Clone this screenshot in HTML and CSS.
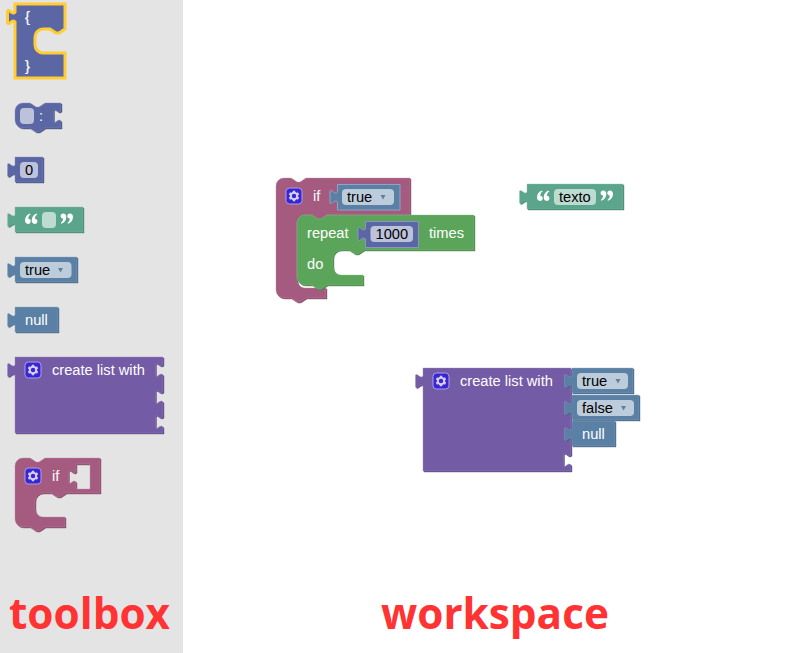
FILE: index.html
```html
<!DOCTYPE html>
<html lang="en">
<head>
<meta charset="utf-8">
<title>Block editor</title>
<link rel="stylesheet" href="styles.css">
</head>
<body>
<svg class="defs" aria-hidden="true">
  <defs>
    <g id="gear">
      <rect class="gear-box" x=".5" y=".5" width="16" height="16" rx="3.5"/>
      <path class="gear-teeth" d="M8.5 3.2V13.8M3.9 5.85L13.1 11.15M3.9 11.15L13.1 5.85"/>
      <circle class="gear-ring" cx="8.5" cy="8.5" r="3.2"/>
    </g>
    <g id="open-quote">
      <path d="M5 0C2 1 0 3.400 0 6.800 0 9 1.200 10.400 3 10.400 4.600 10.400 5.700 9.300 5.700 7.700 5.700 6.200 4.700 5.200 3.300 5.200 3.200 3.200 4 1.900 5.500.9zM11.700 0C8.700 1 6.700 3.400 6.700 6.800 6.700 9 7.900 10.400 9.700 10.400 11.300 10.400 12.400 9.300 12.400 7.700 12.400 6.200 11.400 5.200 10 5.200 9.900 3.200 10.700 1.900 12.200.9z"/>
    </g>
    <path id="arrow" d="M.5 0H5.500L3 4.500Z"/>
  </defs>
</svg>
<main class="editor">
  <aside class="toolbox">
    <div class="palette">
      <svg class="item" width="183" height="90" viewBox="0 0 183 90">
        <path class="indigo selected" d="M15 4H65V29l-6 4h-3l-6-4h-7a8 8 0 0 0-8 8v8a8 8 0 0 0 8 8H65V78H15V22c-1.500-2-3.500-.5-5 .8s-2.500.9-2.500-.3v-11c0-1.200 1-1.600 2.500-.3s3.500 2.800 5 .8z"/>
        <text class="label brace" x="25" y="22">{</text><text class="label brace" x="25" y="71">}</text>
      </svg>
      <svg class="item" width="183" height="55" viewBox="0 90 183 55">
        <path class="block indigo" d="M15 111a8 8 0 0 1 8-8h7l6 4h3l6-4H61v8c-1.500 2-3.500.5-5-.8s-2.500-.9-2.500.3v11c0 1.200 1 1.600 2.500.3s3.500-2.800 5-.8v7H45l-6 4h-3l-6-4h-7a8 8 0 0 1-8-8z"/>
        <rect class="field" x="20" y="108" width="14" height="16" rx="4"/>
        <text class="label" x="39" y="121">:</text>
      </svg>
      <svg class="item" width="183" height="50" viewBox="0 145 183 50">
        <path class="block indigo" d="M15 157H43v25H15v-7c-1.500-2-3.500-.5-5 .8s-2.500.9-2.500-.3v-11c0-1.200 1-1.600 2.500-.3s3.500 2.800 5 .8z"/>
        <rect class="field" x="20" y="162" width="18" height="16" rx="4"/>
        <text class="value" x="25" y="175">0</text>
      </svg>
      <svg class="item" width="183" height="50" viewBox="0 195 183 50">
        <path class="block teal" d="M15 207H83v25H15v-7c-1.500-2-3.500-.5-5 .8s-2.500.9-2.500-.3v-11c0-1.200 1-1.600 2.500-.3s3.500 2.800 5 .8z"/>
        <use class="quote" href="#open-quote" x="25" y="213.500"/>
        <rect class="field" x="42" y="212" width="14" height="16" rx="4"/>
        <use class="quote" href="#open-quote" transform="translate(73 223.800) rotate(180)"/>
      </svg>
      <svg class="item" width="183" height="50" viewBox="0 245 183 50">
        <path class="block blue" d="M15 257H77v25H15v-7c-1.500-2-3.500-.5-5 .8s-2.500.9-2.500-.3v-11c0-1.200 1-1.600 2.500-.3s3.500 2.800 5 .8z"/>
        <rect class="field" x="20" y="262" width="51.500" height="16" rx="4"/>
        <text class="value" x="25" y="275">true</text>
        <use class="arrow" href="#arrow" x="57.500" y="268"/>
      </svg>
      <svg class="item" width="183" height="50" viewBox="0 295 183 50">
        <path class="block blue" d="M15 307H58v25H15v-7c-1.500-2-3.500-.5-5 .8s-2.500.9-2.500-.3v-11c0-1.200 1-1.600 2.500-.3s3.500 2.800 5 .8z"/>
        <text class="label" x="25" y="325">null</text>
      </svg>
      <svg class="item" width="183" height="105" viewBox="0 345 183 105">
        <path class="block purple" d="M15 357H163v8c-1.500 2-3.500.5-5-.8s-2.500-.9-2.500.3v11c0 1.200 1 1.600 2.500.3s3.500-2.800 5-.8V392c-1.500 2-3.500.5-5-.8s-2.500-.9-2.500.3v11c0 1.200 1 1.600 2.500.3s3.500-2.800 5-.8V417c-1.500 2-3.500.5-5-.8s-2.500-.9-2.500.3v11c0 1.200 1 1.600 2.500.3s3.500-2.800 5-.8V433H15V375c-1.500-2-3.500-.5-5 .8s-2.500.9-2.500-.3v-11c0-1.200 1-1.600 2.500-.3s3.500 2.800 5 .8z"/>
        <use href="#gear" x="24.500" y="361.500"/>
        <text class="label" x="52" y="375">create list with</text>
      </svg>
      <svg class="item" width="183" height="100" viewBox="0 450 183 100">
        <path class="block plum" fill-rule="evenodd" d="M15 466a8 8 0 0 1 8-8h7l6 4h3l6-4H100V493H66l-6 4h-3l-6-4h-8a8 8 0 0 0-8 8v8a8 8 0 0 0 8 8H65V527H45l-6 4h-3l-6-4h-7a8 8 0 0 1-8-8zM76 464H90V489H76V482c-1.500-2-3.500-.5-5 .8s-2.500.9-2.500-.3v-11c0-1.200 1-1.600 2.500-.3s3.500 2.800 5 .8z"/>
        <use href="#gear" x="24.500" y="467.500"/>
        <text class="label" x="52" y="481">if</text>
      </svg>
    </div>
    <h2 class="caption">toolbox</h2>
  </aside>
  <section class="workspace">
    <svg class="canvas" width="604" height="550" viewBox="183 0 604 550">
      <g>
        <path class="block plum" d="M276 186a8 8 0 0 1 8-8h7l6 4h3l6-4H410V215H327l-6 4h-3l-6-4h-7a8 8 0 0 0-8 8V280a8 8 0 0 0 8 8H326V298H306l-6 4h-3l-6-4h-7a8 8 0 0 1-8-8z"/>
        <use href="#gear" x="285.500" y="187.500"/>
        <text class="label" x="313" y="201">if</text>
        <path class="block blue nested" d="M337.500 184.500H400V210H337.500V202c-1.500-2-3.500-.5-5 .8s-2.500.9-2.500-.3v-11c0-1.200 1-1.600 2.500-.3s3.500 2.800 5 .8z"/>
        <rect class="field" x="342" y="189" width="52" height="16" rx="4"/>
        <text class="value" x="347" y="202">true</text>
        <use class="arrow" href="#arrow" x="380" y="195"/>
        <path class="block green" d="M297 223a8 8 0 0 1 8-8h7l6 4h3l6-4H474V250H364l-6 4h-3l-6-4h-8a8 8 0 0 0-8 8v9a8 8 0 0 0 8 8H363V285H327l-6 4h-3l-6-4h-7a8 8 0 0 1-8-8z"/>
        <text class="label" x="307" y="238">repeat</text>
        <path class="block indigo nested" d="M365.500 221.500H418.500V247.500H365.500V239c-1.500-2-3.500-.5-5 .8s-2.500.9-2.500-.3v-11c0-1.200 1-1.600 2.500-.3s3.500 2.800 5 .8z"/>
        <rect class="field" x="370.500" y="226" width="42.500" height="16" rx="4"/>
        <text class="value" x="375.500" y="239">1000</text>
        <text class="label" x="429" y="238">times</text>
        <text class="label" x="307" y="269">do</text>
      </g>
      <g>
        <path class="block teal" d="M527 184H623v25H527v-7c-1.500-2-3.500-.5-5 .8s-2.500.9-2.500-.3v-11c0-1.200 1-1.600 2.500-.3s3.500 2.800 5 .8z"/>
        <use class="quote" href="#open-quote" x="537" y="190.500"/>
        <rect class="field" x="554" y="189" width="42" height="16" rx="4"/>
        <text class="value" x="559" y="202">texto</text>
        <use class="quote" href="#open-quote" transform="translate(613 200.800) rotate(180)"/>
      </g>
      <g>
        <path class="block purple" d="M423 368H571V455c-1.500 2-3.500.5-5-.8s-2.500-.9-2.500.3v11c0 1.200 1 1.600 2.500.3s3.500-2.800 5-.8V471H423V386c-1.500-2-3.500-.5-5 .8s-2.500.9-2.500-.3v-11c0-1.200 1-1.600 2.500-.3s3.500 2.800 5 .8z"/>
        <use href="#gear" x="432.500" y="372.500"/>
        <text class="label" x="460" y="386">create list with</text>
        <path class="block blue" d="M572 368H633v25H572v-7c-1.500-2-3.500-.5-5 .8s-2.500.9-2.500-.3v-11c0-1.200 1-1.600 2.500-.3s3.500 2.800 5 .8z"/>
        <rect class="field" x="577" y="373" width="51" height="16" rx="4"/>
        <text class="value" x="582" y="386">true</text>
        <use class="arrow" href="#arrow" x="615" y="379"/>
        <path class="block blue" d="M572 395H639v25H572v-7c-1.500-2-3.500-.5-5 .8s-2.500.9-2.500-.3v-11c0-1.200 1-1.600 2.500-.3s3.500 2.800 5 .8z"/>
        <rect class="field" x="577" y="400" width="57" height="16" rx="4"/>
        <text class="value" x="582" y="413">false</text>
        <use class="arrow" href="#arrow" x="620.500" y="406"/>
        <path class="block blue" d="M572 421H615v25H572v-7c-1.500-2-3.500-.5-5 .8s-2.500.9-2.500-.3v-11c0-1.200 1-1.600 2.500-.3s3.500 2.800 5 .8z"/>
        <text class="label" x="582" y="439">null</text>
      </g>
    </svg>
    <h2 class="caption">workspace</h2>
  </section>
</main>
</body>
</html>
```
FILE: styles.css
```css
body {
  margin: 0;
  background: #fff;
  font-family: "Liberation Sans", Arial, sans-serif;
}
.defs {
  position: absolute;
  width: 0;
  height: 0;
}
.editor {
  display: flex;
  height: 653px;
  overflow: hidden;
}
.toolbox {
  width: 183px;
  flex: none;
  display: flex;
  flex-direction: column;
  background: #e4e4e4;
}
.palette {
  display: flex;
  flex-direction: column;
  height: 550px;
}
.workspace {
  flex: 1;
  display: flex;
  flex-direction: column;
}
.item,
.canvas {
  display: block;
  flex: none;
}
.caption {
  margin: 0;
  padding-top: 33px;
  font: 700 42.3px/60px "Open Sans", sans-serif;
  color: #f33;
}
.toolbox .caption {
  padding-left: 9px;
}
.workspace .caption {
  padding-left: 198px;
}
.indigo { fill: #5b67a5; --dark: #495284; --light: #8c95c0; }
.teal { fill: #5ba58c; --dark: #498470; --light: #8cc0ae; }
.blue { fill: #5b80a5; --dark: #496684; --light: #8ca6c0; }
.purple { fill: #745ba5; --dark: #5d4984; --light: #9e8cc0; }
.plum { fill: #a55b80; --dark: #844966; --light: #c08ca6; }
.green { fill: #5ba55b; --dark: #498449; --light: #8cc08c; }
.block {
  filter: drop-shadow(1px 1px 0 var(--dark));
  stroke: var(--light);
  stroke-width: 0.4;
}
.nested {
  filter: none;
  stroke-width: 1;
}
.selected {
  stroke: #fc3;
  stroke-width: 3;
}
.label,
.value {
  font-size: 14.667px;
}
.label { fill: #fff; }
.brace { stroke: #fff; stroke-width: 0.2; }
.value { fill: #000; }
.field { fill: #fff; fill-opacity: 0.6; }
.quote { fill: #fff; }
.arrow { fill: #5b80a5; }
.gear-box { fill: #3a26d0; stroke: #a9a0ee; }
.gear-teeth { fill: none; stroke: #d5d0f5; stroke-width: 2.4; }
.gear-ring { fill: #3a26d0; stroke: #d5d0f5; stroke-width: 2; }
```
